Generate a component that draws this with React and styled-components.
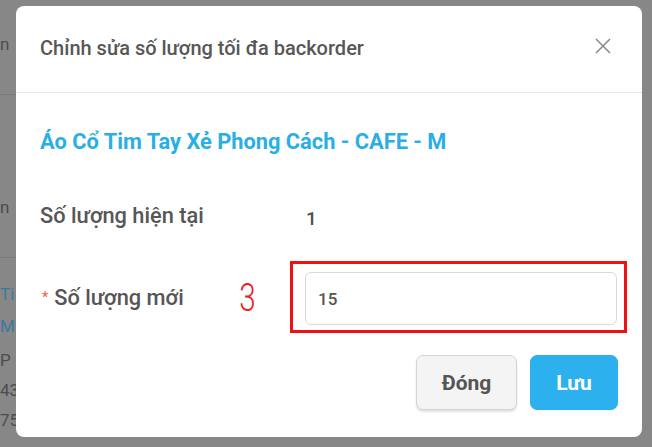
import React from 'react';
import styled, { createGlobalStyle } from 'styled-components';

const GlobalStyle = createGlobalStyle`
  html, body {
    margin: 0;
    padding: 0;
    background: #878787;
  }
  body {
    font-family: Roboto, "Noto Sans", "Liberation Sans", sans-serif;
  }
`;

const Screen = styled.div`
  width: 652px;
  height: 447px;
  display: flex;
  background: #878787;
  overflow: hidden;
`;

const PageEdge = styled.div`
  width: 16px;
  flex: none;
  display: flex;
  flex-direction: column;
  padding-top: 36px;
  overflow: hidden;
  font-size: 17px;
  line-height: 1;
`;

const EdgeText = styled.div`
  height: ${({ h }) => h}px;
  color: ${({ blue }) => (blue ? '#3b7aa0' : '#4c4c4c')};
  border-bottom: ${({ line }) => (line ? '1px solid #7a7a7a' : 'none')};
  white-space: nowrap;
  overflow: hidden;
`;

const Modal = styled.div`
  margin-top: 6px;
  width: 626px;
  height: 431px;
  background: #fff;
  border-radius: 8px;
  display: flex;
  flex-direction: column;
  overflow: hidden;
`;

const Header = styled.div`
  height: 86px;
  flex: none;
  display: flex;
  align-items: center;
  justify-content: space-between;
  padding: 0 28px 0 24px;
  border-bottom: 1px solid #e6e6e6;
`;

const Title = styled.div`
  font-size: 20px;
  font-weight: 500;
  color: #575757;
  margin-top: -2px;
`;

const CloseButton = styled.div`
  width: 22px;
  height: 22px;
  display: flex;
  align-items: center;
  justify-content: center;
  margin-top: -6px;
`;

const Body = styled.div`
  display: flex;
  flex-direction: column;
  padding: 0 15px 0 24px;
`;

const ProductName = styled.div`
  height: 96px;
  display: flex;
  align-items: center;
  font-size: 21.8px;
  font-weight: 700;
  color: #2aaee6;
`;

const FormRow = styled.div`
  display: grid;
  grid-template-columns: 250px 1fr;
  align-items: center;
  height: ${({ h }) => h}px;
  margin-top: ${({ mt }) => mt || 0}px;
`;

const Label = styled.div`
  font-size: 21.8px;
  font-weight: 500;
  color: #565656;
  display: flex;
  align-items: center;
  justify-content: space-between;
  padding-right: 32px;
`;

const LabelText = styled.span`
  display: flex;
  align-items: center;
  gap: 6px;
`;

const Required = styled.span`
  color: #f26b3a;
  font-size: 14px;
  margin-left: 2px;
`;

const Marker = styled.span`
  display: inline-block;
  color: #ee1c1c;
  font-size: 38px;
  font-weight: 300;
  transform: scaleX(0.78);
  margin-top: 2px;
`;

const Value = styled.div`
  padding-left: 16px;
  font-size: 19px;
  font-weight: 500;
  color: #4f4f4f;
  margin-top: 6px;
`;

const Highlight = styled.div`
  height: 72px;
  box-sizing: border-box;
  border: 3px solid #ee1111;
  padding: 8px 7px 5px 12px;
  display: flex;
`;

const Input = styled.input`
  flex: 1;
  min-width: 0;
  box-sizing: border-box;
  height: 100%;
  border: 1px solid #d9d9d9;
  border-radius: 6px;
  padding: 0 12px;
  font-family: Roboto, "Noto Sans", sans-serif;
  font-size: 17px;
  font-weight: 500;
  color: #555;
  outline: none;
  background: #fff;
`;

const Footer = styled.div`
  display: flex;
  justify-content: flex-end;
  gap: 13px;
  padding: 22px 24px 0 0;
`;

const Button = styled.button`
  height: 55px;
  width: ${({ w }) => w}px;
  box-sizing: border-box;
  border-radius: 7px;
  font-family: Roboto, "Noto Sans", sans-serif;
  font-size: 21px;
  font-weight: 700;
  cursor: pointer;
  border: ${({ primary }) => (primary ? '1px solid #2cb1ee' : '1px solid #d4d4d4')};
  background: ${({ primary }) => (primary ? '#2cb1ee' : '#f4f4f4')};
  color: ${({ primary }) => (primary ? '#fff' : '#555')};
  box-shadow: ${({ primary }) => (primary ? 'none' : '0 2px 2px rgba(0,0,0,0.12)')};
`;

const RightEdge = styled.div`
  flex: 1;
`;

export default function App() {
  return (
    <>
      <GlobalStyle />
      <Screen>
        <PageEdge>
          <EdgeText h={58} line>n</EdgeText>
          <EdgeText h={104} />
          <EdgeText h={58} line>n</EdgeText>
          <EdgeText h={28} />
          <EdgeText h={32} blue>Ti</EdgeText>
          <EdgeText h={34} blue>M</EdgeText>
          <EdgeText h={30}>P</EdgeText>
          <EdgeText h={30}>43</EdgeText>
          <EdgeText h={30}>75</EdgeText>
        </PageEdge>
        <Modal>
          <Header>
            <Title>Chỉnh sửa số lượng tối đa backorder</Title>
            <CloseButton>
              <svg width="16" height="16" viewBox="0 0 16 16">
                <path d="M1 1 L15 15 M15 1 L1 15" stroke="#8c8c8c" strokeWidth="1.6" fill="none" />
              </svg>
            </CloseButton>
          </Header>
          <Body>
            <ProductName>Áo Cổ Tim Tay Xẻ Phong Cách - CAFE - M</ProductName>
            <FormRow h={52}>
              <Label>
                <LabelText>Số lượng hiện tại</LabelText>
              </Label>
              <Value>1</Value>
            </FormRow>
            <FormRow h={72} mt={20}>
              <Label>
                <LabelText>
                  <Required>*</Required>
                  Số lượng mới
                </LabelText>
                <Marker>3</Marker>
              </Label>
              <Highlight>
                <Input defaultValue="15" />
              </Highlight>
            </FormRow>
          </Body>
          <Footer>
            <Button w={101}>Đóng</Button>
            <Button w={88} primary>
              Lưu
            </Button>
          </Footer>
        </Modal>
        <RightEdge />
      </Screen>
    </>
  );
}
